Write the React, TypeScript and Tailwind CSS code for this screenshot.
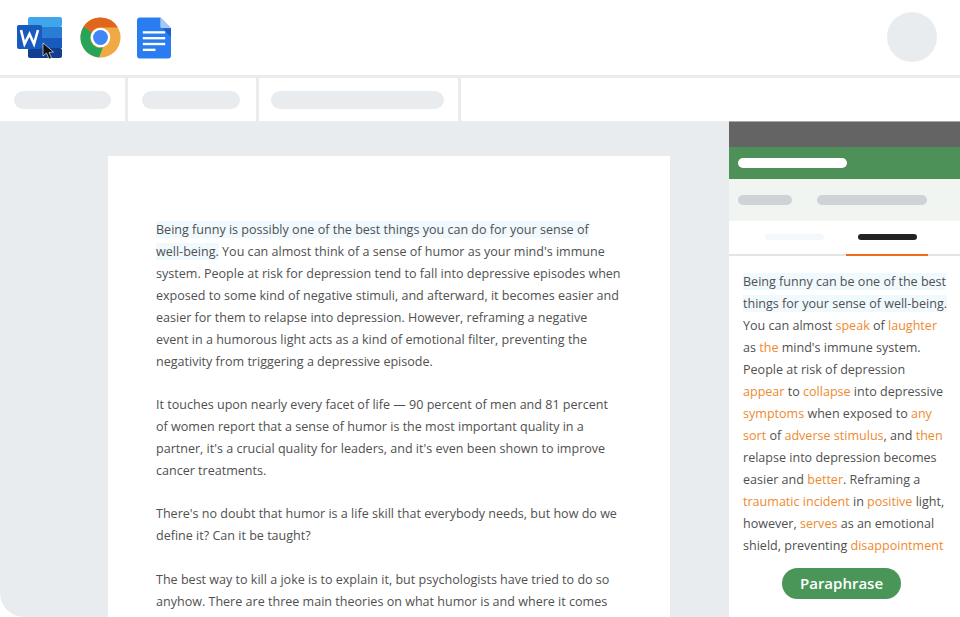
const docParagraphs = [
  [
    "Being funny is possibly one of the best things you can do for your sense of",
    "well-being. You can almost think of a sense of humor as your mind's immune",
    "system. People at risk for depression tend to fall into depressive episodes when",
    "exposed to some kind of negative stimuli, and afterward, it becomes easier and",
    "easier for them to relapse into depression. However, reframing a negative",
    "event in a humorous light acts as a kind of emotional filter, preventing the",
    "negativity from triggering a depressive episode.",
  ],
  [
    "It touches upon nearly every facet of life — 90 percent of men and 81 percent",
    "of women report that a sense of humor is the most important quality in a",
    "partner, it's a crucial quality for leaders, and it's even been shown to improve",
    "cancer treatments.",
  ],
  [
    "There's no doubt that humor is a life skill that everybody needs, but how do we",
    "define it? Can it be taught?",
  ],
  [
    "The best way to kill a joke is to explain it, but psychologists have tried to do so",
    "anyhow. There are three main theories on what humor is and where it comes",
  ],
];

// [text, changed] pairs, one array per line
const panelLines: [string, boolean][][] = [
  [["You can almost ", false], ["speak", true], [" of ", false], ["laughter", true]],
  [["as ", false], ["the", true], [" mind's immune system.", false]],
  [["People at risk of depression", false]],
  [["appear", true], [" to ", false], ["collapse", true], [" into depressive", false]],
  [["symptoms", true], [" when exposed to ", false], ["any", true]],
  [["sort", true], [" of ", false], ["adverse stimulus", true], [", and ", false], ["then", true]],
  [["relapse into depression becomes", false]],
  [["easier and ", false], ["better", true], [". Reframing a", false]],
  [["traumatic incident", true], [" in ", false], ["positive", true], [" light,", false]],
  [["however, ", false], ["serves", true], [" as an emotional", false]],
  [["shield, preventing ", false], ["disappointment", true]],
];

function WordIcon() {
  return (
    <svg width="46" height="42" viewBox="0 0 46 42">
      <rect x="11" y="0" width="34" height="10" rx="2" fill="#41a5ee" />
      <rect x="11" y="10" width="34" height="11" fill="#2b7cd3" />
      <rect x="11" y="21" width="34" height="10" fill="#185abd" />
      <rect x="11" y="31" width="34" height="10" rx="2" fill="#103f91" />
      <rect x="0" y="8" width="25" height="24" rx="2" fill="#185abd" />
      <path d="M4 13 L7.5 27 L12.5 17 L17 27 L21 13" fill="none" stroke="#fff" strokeWidth="2.6" />
      <path
        d="M26 29 L26 42 L29.5 39 L32 45 L34.5 44 L32 38.5 L36.5 38 Z"
        fill="#111"
        stroke="#fff"
        strokeWidth="0.6"
        transform="translate(0 -3)"
      />
    </svg>
  );
}

function ChromeIcon() {
  return (
    <svg width="41" height="41" viewBox="0 0 42 42">
      <circle cx="21" cy="21" r="20.5" fill="#f0a945" />
      <path d="M21 .5 A20.5 20.5 0 0 1 38.8 10.8 L21 10.8 A10.2 10.2 0 0 0 12 16 L3.8 9.8 A20.5 20.5 0 0 1 21 .5 Z" fill="#e0661d" />
      <path d="M3.8 9.8 L12 16 A10.2 10.2 0 0 0 23.5 31 L19.5 41.4 A20.5 20.5 0 0 1 3.8 9.8 Z" fill="#27a35a" />
      <circle cx="21" cy="21" r="10" fill="#fff" />
      <circle cx="21" cy="21" r="7.6" fill="#4285f4" />
    </svg>
  );
}

function DocsIcon() {
  return (
    <svg width="34" height="42" viewBox="0 0 35 42">
      <path d="M3 0 L24 0 L35 11 L35 39 A3 3 0 0 1 32 42 L3 42 A3 3 0 0 1 0 39 L0 3 A3 3 0 0 1 3 0 Z" fill="#2a7df0" />
      <path d="M24 0 L35 11 L26 11 A2 2 0 0 1 24 9 Z" fill="#a5c8f8" />
      <path d="M26 11 L35 11 L35 20 Z" fill="#1d5fc4" />
      <rect x="6" y="14" width="23" height="2.4" fill="#fff" />
      <rect x="6" y="20" width="23" height="2.4" fill="#fff" />
      <rect x="6" y="26" width="23" height="2.4" fill="#fff" />
      <rect x="6" y="32" width="13" height="2.4" fill="#fff" />
    </svg>
  );
}

export default function App() {
  return (
    <div className="flex h-[617px] w-[960px] flex-col overflow-hidden bg-white font-['Open_Sans',sans-serif] text-[12.56px] leading-[22px] text-[#505050]">
      {/* top bar */}
      <div className="flex h-[75px] shrink-0 items-center justify-between pl-[17px] pr-[23px]">
        <div className="flex items-center">
          <WordIcon />
          <div className="ml-[17px]"><ChromeIcon /></div>
          <div className="ml-[16px]"><DocsIcon /></div>
        </div>
        <div className="mb-[2px] h-[50px] w-[50px] rounded-full bg-[#e9ecef]" />
      </div>

      {/* toolbar */}
      <div className="flex h-[46px] shrink-0 border-t-[3px] border-[#e9ecef]">
        <div className="flex w-[128px] items-center border-r-[3px] border-[#e9ecef] pl-[14px]">
          <div className="h-[18px] w-[97px] rounded-full bg-[#e9ecef]" />
        </div>
        <div className="flex w-[131px] items-center border-r-[3px] border-[#e9ecef] pl-[14px]">
          <div className="h-[18px] w-[98px] rounded-full bg-[#e9ecef]" />
        </div>
        <div className="flex w-[202px] items-center border-r-[3px] border-[#e9ecef] pl-[12px]">
          <div className="h-[18px] w-[173px] rounded-full bg-[#e9ecef]" />
        </div>
      </div>

      <div className="flex min-h-0 flex-1">
        {/* document area */}
        <div className="min-w-0 flex-1 overflow-hidden rounded-bl-[24px] bg-[#e9ecef] pl-[108px] pt-[35px]">
          <div className="h-[600px] w-[562px] bg-white pl-[48px] pt-[63px]">
            {docParagraphs.map((lines, p) => (
              <div key={p} className="mb-[21.2px]">
                {lines.map((line, i) => (
                  <div key={i} className="whitespace-nowrap">
                    {p === 0 && i === 0 ? (
                      <span className="bg-[#f0f9fe]">{line}</span>
                    ) : p === 0 && i === 1 ? (
                      <>
                        <span className="bg-[#f0f9fe]">well-being.</span>
                        {line.slice(11)}
                      </>
                    ) : (
                      line
                    )}
                  </div>
                ))}
              </div>
            ))}
          </div>
        </div>

        {/* paraphrase panel */}
        <div className="flex w-[231px] shrink-0 flex-col">
          <div className="h-[26px] shrink-0 border-t border-[#a8a8a8] bg-[#646464]" />
          <div className="flex h-[32px] shrink-0 items-center bg-[#4d9158] pl-[9px]">
            <div className="h-[10px] w-[109px] rounded-full bg-white" />
          </div>
          <div className="flex h-[42px] shrink-0 items-center gap-[25px] bg-[#f1f5f2] pl-[9px]">
            <div className="h-[10px] w-[54px] rounded-full bg-[#d0d3d6]" />
            <div className="h-[10px] w-[110px] rounded-full bg-[#d0d3d6]" />
          </div>
          <div className="flex h-[35px] shrink-0 border-b-[2px] border-[#e4e4e4]">
            <div className="flex w-[117px] items-center justify-center pb-[2px] pl-[14px]">
              <div className="h-[6px] w-[59px] rounded-full bg-[#f2f8fb]" />
            </div>
            <div className="-mb-[2px] flex w-[82px] items-center justify-center border-b-[2px] border-[#ee6c13] pb-[2px]">
              <div className="h-[6px] w-[59px] rounded-full bg-[#222222]" />
            </div>
          </div>
          <div className="whitespace-nowrap pl-[14px] pt-[15px]">
            <div><span className="bg-[#f0f9fe]">Being funny can be one of the best</span></div>
            <div><span className="bg-[#f0f9fe]">things for your sense of well-being.</span></div>
            {panelLines.map((line, i) => (
              <div key={i}>
                {line.map(([text, changed], j) => (
                  <span key={j} className={changed ? "text-[#ee8a2f]" : undefined}>{text}</span>
                ))}
              </div>
            ))}
          </div>
          <div className="flex justify-center pr-[6px] pt-[11px]">
            <button className="h-[31px] w-[119px] rounded-full bg-[#4a9659] text-[15px] font-semibold leading-[31px] text-white">
              Paraphrase
            </button>
          </div>
        </div>
      </div>
    </div>
  );
}
